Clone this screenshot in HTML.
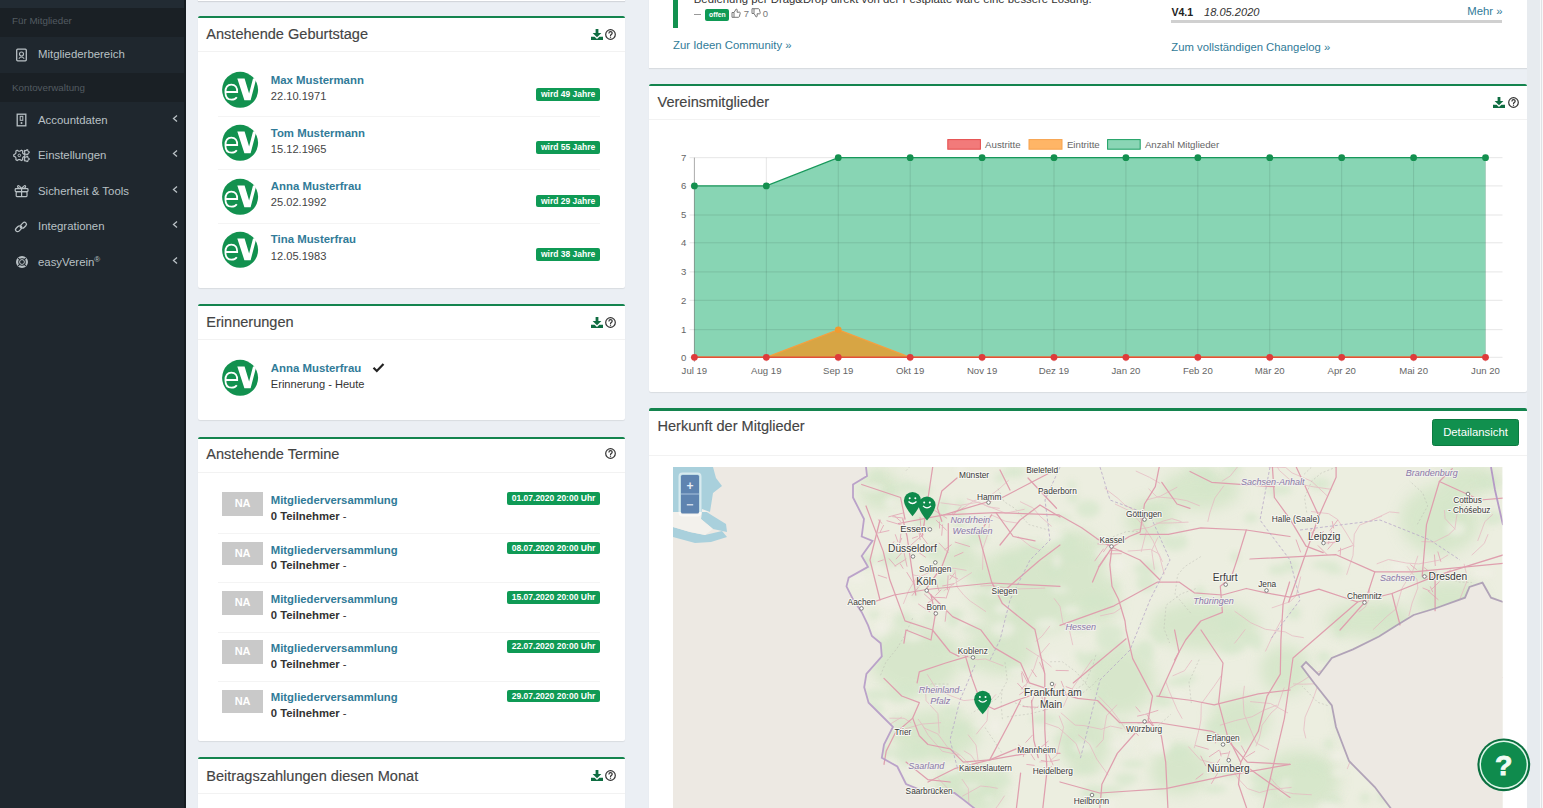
<!DOCTYPE html>
<html><head><meta charset="utf-8"><title>easyVerein</title>
<style>
html,body{margin:0;padding:0;}
body{width:1543px;height:808px;overflow:hidden;position:relative;background:#ebeff4;font-family:"Liberation Sans", sans-serif;}
.t{position:absolute;white-space:nowrap;line-height:1;}
svg{overflow:visible}
</style></head><body>
<div style="position:absolute;left:0.00px;top:0.00px;width:186.00px;height:808.00px;background:#1f272e"></div>
<div style="position:absolute;left:0.00px;top:0.00px;width:186.00px;height:8.00px;background:#222b33"></div>
<div style="position:absolute;left:0.00px;top:8.00px;width:186.00px;height:28.50px;background:#1a2025"></div>
<div style="position:absolute;left:0.00px;top:73.00px;width:186.00px;height:29.00px;background:#1a2025"></div>
<div style="position:absolute;left:184.00px;top:0.00px;width:2.00px;height:808.00px;background:#161c21"></div>
<div class="t" style="left:12.00px;top:16.17px;font-size:9.8px;color:#535b61;font-weight:400;">Für Mitglieder</div>
<div class="t" style="left:12.00px;top:82.67px;font-size:9.8px;color:#535b61;font-weight:400;">Kontoverwaltung</div>
<div class="t" style="left:38.00px;top:49.11px;font-size:11.4px;color:#b9c1c5;font-weight:400;">Mitgliederbereich</div>
<div class="t" style="left:38.00px;top:114.91px;font-size:11.4px;color:#b9c1c5;font-weight:400;">Accountdaten</div>
<svg style="position:absolute;left:171px;top:113.6px" width="8" height="10"><polyline points="6,1.5 2.5,4.5 6,7.5" fill="none" stroke="#b9c1c5" stroke-width="1.3"/></svg>
<div class="t" style="left:38.00px;top:150.41px;font-size:11.4px;color:#b9c1c5;font-weight:400;">Einstellungen</div>
<svg style="position:absolute;left:171px;top:149.1px" width="8" height="10"><polyline points="6,1.5 2.5,4.5 6,7.5" fill="none" stroke="#b9c1c5" stroke-width="1.3"/></svg>
<div class="t" style="left:38.00px;top:185.91px;font-size:11.4px;color:#b9c1c5;font-weight:400;">Sicherheit &amp; Tools</div>
<svg style="position:absolute;left:171px;top:184.6px" width="8" height="10"><polyline points="6,1.5 2.5,4.5 6,7.5" fill="none" stroke="#b9c1c5" stroke-width="1.3"/></svg>
<div class="t" style="left:38.00px;top:221.41px;font-size:11.4px;color:#b9c1c5;font-weight:400;">Integrationen</div>
<svg style="position:absolute;left:171px;top:220.1px" width="8" height="10"><polyline points="6,1.5 2.5,4.5 6,7.5" fill="none" stroke="#b9c1c5" stroke-width="1.3"/></svg>
<div class="t" style="left:38.00px;top:256.91px;font-size:11.4px;color:#b9c1c5;font-weight:400;">easyVerein<span style="font-size:8px;position:relative;top:-4px">®</span></div>
<svg style="position:absolute;left:171px;top:255.6px" width="8" height="10"><polyline points="6,1.5 2.5,4.5 6,7.5" fill="none" stroke="#b9c1c5" stroke-width="1.3"/></svg>
<svg style="position:absolute;left:15px;top:48px" width="13" height="14"><rect x="1.7" y="1.2" width="9.6" height="11.6" rx="1" fill="none" stroke="#b9c1c5" stroke-width="1.3"/><circle cx="6.5" cy="6" r="2" fill="none" stroke="#b9c1c5" stroke-width="1.1"/><path d="M3.8 10.6 Q6.5 7.5 9.2 10.6" fill="none" stroke="#b9c1c5" stroke-width="1.1"/></svg>
<svg style="position:absolute;left:15px;top:113px" width="13" height="14"><rect x="2.2" y="1.2" width="8.6" height="11.6" fill="none" stroke="#b9c1c5" stroke-width="1.3"/><rect x="5.2" y="3.3" width="2.6" height="4" fill="none" stroke="#b9c1c5" stroke-width="1"/><circle cx="6.5" cy="10" r="1" fill="#b9c1c5"/></svg>
<svg style="position:absolute;left:0;top:0" width="40" height="300"><polygon points="24.85,154.67 24.85,156.13 23.18,157.01 22.63,157.96 22.71,159.84 21.44,160.57 19.85,159.56 18.75,159.56 17.16,160.57 15.89,159.84 15.97,157.96 15.42,157.01 13.75,156.13 13.75,154.67 15.42,153.79 15.97,152.84 15.89,150.96 17.16,150.23 18.75,151.24 19.85,151.24 21.44,150.23 22.71,150.96 22.63,152.84 23.18,153.79" fill="none" stroke="#b9c1c5" stroke-width="1.2" stroke-linejoin="round"/><circle cx="19.3" cy="155.4" r="1.3" fill="none" stroke="#b9c1c5" stroke-width="1"/><polygon points="29.17,151.89 29.17,152.71 28.29,153.16 27.94,153.64 27.78,154.62 27.01,154.87 26.30,154.18 25.74,153.99 24.76,154.14 24.28,153.48 24.72,152.60 24.72,152.00 24.28,151.12 24.76,150.46 25.74,150.61 26.30,150.42 27.01,149.73 27.78,149.98 27.94,150.96 28.29,151.44" fill="none" stroke="#b9c1c5" stroke-width="1.1"/><polygon points="29.17,158.59 29.17,159.41 28.29,159.86 27.94,160.34 27.78,161.32 27.01,161.57 26.30,160.88 25.74,160.69 24.76,160.84 24.28,160.18 24.72,159.30 24.72,158.70 24.28,157.82 24.76,157.16 25.74,157.31 26.30,157.12 27.01,156.43 27.78,156.68 27.94,157.66 28.29,158.14" fill="none" stroke="#b9c1c5" stroke-width="1.1"/></svg>
<svg style="position:absolute;left:0;top:0" width="40" height="300"><rect x="15.2" y="188.6" width="12.8" height="3" rx="0.8" fill="none" stroke="#b9c1c5" stroke-width="1.2"/><rect x="16.2" y="191.6" width="10.8" height="5" rx="0.8" fill="none" stroke="#b9c1c5" stroke-width="1.2"/><line x1="21.6" y1="188.6" x2="21.6" y2="196.6" stroke="#b9c1c5" stroke-width="1.2"/><path d="M21.6 188.4 Q18 184 17.5 186.5 Q17.5 188.4 21.6 188.4 Q25.2 184 25.7 186.5 Q25.7 188.4 21.6 188.4" fill="none" stroke="#b9c1c5" stroke-width="1.1"/></svg>
<svg style="position:absolute;left:14px;top:219.5px" width="14" height="14"><path d="M6 8 L8 6" stroke="#b9c1c5" stroke-width="1.3"/><rect x="1.2" y="6.8" width="6.5" height="4" rx="2" transform="rotate(-45 4.5 8.8)" fill="none" stroke="#b9c1c5" stroke-width="1.3"/><rect x="6.3" y="3.2" width="6.5" height="4" rx="2" transform="rotate(-45 9.5 5.2)" fill="none" stroke="#b9c1c5" stroke-width="1.3"/></svg>
<svg style="position:absolute;left:14.5px;top:255px" width="14" height="14"><circle cx="7" cy="7" r="4.9" fill="none" stroke="#b9c1c5" stroke-width="2.2"/><circle cx="7" cy="7" r="2.2" fill="#1f272e"/><path d="M3.2 3.2 L5.2 5.2 M10.8 3.2 L8.8 5.2 M3.2 10.8 L5.2 8.8 M10.8 10.8 L8.8 8.8" stroke="#1f272e" stroke-width="1.2"/><circle cx="7" cy="7" r="2.4" fill="none" stroke="#b9c1c5" stroke-width="1"/></svg>
<div style="position:absolute;left:198.00px;top:-10.00px;width:426.50px;height:11.00px;background:#fff;box-shadow:0 1px 1px rgba(0,0,0,0.1)"></div>
<div style="position:absolute;left:198.00px;top:16.00px;width:426.50px;height:272.00px;background:#fff;box-shadow:0 1px 1px rgba(0,0,0,0.08);border-radius:2px"></div>
<div style="position:absolute;left:198.00px;top:16.00px;width:426.50px;height:2.40px;background:#14844e;border-radius:2px 2px 0 0"></div>
<div class="t" style="left:206.30px;top:26.93px;font-size:14.55px;color:#444;font-weight:400;-webkit-text-stroke:0.15px #444">Anstehende Geburtstage</div>
<div style="position:absolute;left:198.00px;top:51.00px;width:426.50px;height:1.00px;background:#f2f2f2"></div>
<svg style="position:absolute;left:590.5px;top:29.0px" width="12" height="11"><rect x="4.6" y="0" width="2.8" height="4.5" fill="#0f6d42"/><polygon points="1.6,4 10.4,4 6,8.3" fill="#0f6d42"/><path d="M0 7.8 H3.6 L6 10 L8.4 7.8 H12 V11 H0 Z" fill="#0f6d42"/></svg>
<svg style="position:absolute;left:605.2px;top:29.0px" width="11" height="11"><circle cx="5.5" cy="5.5" r="4.8" fill="none" stroke="#333" stroke-width="1.2"/><path d="M3.9 4.4 Q3.9 2.6 5.5 2.6 Q7.2 2.6 7.2 4.1 Q7.2 5.1 6.1 5.6 Q5.5 5.9 5.5 6.9" fill="none" stroke="#333" stroke-width="1.2"/><rect x="4.9" y="7.6" width="1.2" height="1.2" fill="#333"/></svg>
<svg style="position:absolute;left:222.1px;top:72.0px" width="37" height="37" viewBox="0 0 37 37"><circle cx="18.1" cy="17.8" r="18" fill="#12914f"/><path d="M4.2 20 H15.2 Q15.4 12.6 9.3 12.6 Q3.4 12.6 3.4 20.2 Q3.4 27.7 9.6 27.7 Q13 27.7 14.8 25.2" fill="none" stroke="#fff" stroke-width="1.8"/><polygon points="15.3,6.6 22.6,6.6 27.1,21.5 31,6.6 34.3,6.6 28.6,28.2 22.4,28.2" fill="#fff"/></svg>
<div class="t" style="left:270.80px;top:74.51px;font-size:11.4px;color:#317b98;font-weight:700;">Max Mustermann</div>
<div class="t" style="left:270.80px;top:90.77px;font-size:11.1px;color:#444;font-weight:400;">22.10.1971</div>
<div style="position:absolute;left:536.30px;top:88.10px;width:63.70px;height:12.70px;background:#0f9a55;border-radius:2px;color:#fff;font-weight:700;font-size:8.5px;line-height:12.70px;text-align:center;white-space:nowrap">wird 49 Jahre</div>
<div style="position:absolute;left:218.00px;top:116.00px;width:382.00px;height:1.00px;background:#f4f4f4"></div>
<svg style="position:absolute;left:222.1px;top:125.3px" width="37" height="37" viewBox="0 0 37 37"><circle cx="18.1" cy="17.8" r="18" fill="#12914f"/><path d="M4.2 20 H15.2 Q15.4 12.6 9.3 12.6 Q3.4 12.6 3.4 20.2 Q3.4 27.7 9.6 27.7 Q13 27.7 14.8 25.2" fill="none" stroke="#fff" stroke-width="1.8"/><polygon points="15.3,6.6 22.6,6.6 27.1,21.5 31,6.6 34.3,6.6 28.6,28.2 22.4,28.2" fill="#fff"/></svg>
<div class="t" style="left:270.80px;top:127.76px;font-size:11.4px;color:#317b98;font-weight:700;">Tom Mustermann</div>
<div class="t" style="left:270.80px;top:144.01px;font-size:11.1px;color:#444;font-weight:400;">15.12.1965</div>
<div style="position:absolute;left:536.30px;top:141.35px;width:63.70px;height:12.70px;background:#0f9a55;border-radius:2px;color:#fff;font-weight:700;font-size:8.5px;line-height:12.70px;text-align:center;white-space:nowrap">wird 55 Jahre</div>
<div style="position:absolute;left:218.00px;top:169.25px;width:382.00px;height:1.00px;background:#f4f4f4"></div>
<svg style="position:absolute;left:222.1px;top:178.5px" width="37" height="37" viewBox="0 0 37 37"><circle cx="18.1" cy="17.8" r="18" fill="#12914f"/><path d="M4.2 20 H15.2 Q15.4 12.6 9.3 12.6 Q3.4 12.6 3.4 20.2 Q3.4 27.7 9.6 27.7 Q13 27.7 14.8 25.2" fill="none" stroke="#fff" stroke-width="1.8"/><polygon points="15.3,6.6 22.6,6.6 27.1,21.5 31,6.6 34.3,6.6 28.6,28.2 22.4,28.2" fill="#fff"/></svg>
<div class="t" style="left:270.80px;top:181.01px;font-size:11.4px;color:#317b98;font-weight:700;">Anna Musterfrau</div>
<div class="t" style="left:270.80px;top:197.26px;font-size:11.1px;color:#444;font-weight:400;">25.02.1992</div>
<div style="position:absolute;left:536.30px;top:194.60px;width:63.70px;height:12.70px;background:#0f9a55;border-radius:2px;color:#fff;font-weight:700;font-size:8.5px;line-height:12.70px;text-align:center;white-space:nowrap">wird 29 Jahre</div>
<div style="position:absolute;left:218.00px;top:222.50px;width:382.00px;height:1.00px;background:#f4f4f4"></div>
<svg style="position:absolute;left:222.1px;top:231.8px" width="37" height="37" viewBox="0 0 37 37"><circle cx="18.1" cy="17.8" r="18" fill="#12914f"/><path d="M4.2 20 H15.2 Q15.4 12.6 9.3 12.6 Q3.4 12.6 3.4 20.2 Q3.4 27.7 9.6 27.7 Q13 27.7 14.8 25.2" fill="none" stroke="#fff" stroke-width="1.8"/><polygon points="15.3,6.6 22.6,6.6 27.1,21.5 31,6.6 34.3,6.6 28.6,28.2 22.4,28.2" fill="#fff"/></svg>
<div class="t" style="left:270.80px;top:234.26px;font-size:11.4px;color:#317b98;font-weight:700;">Tina Musterfrau</div>
<div class="t" style="left:270.80px;top:250.51px;font-size:11.1px;color:#444;font-weight:400;">12.05.1983</div>
<div style="position:absolute;left:536.30px;top:247.85px;width:63.70px;height:12.70px;background:#0f9a55;border-radius:2px;color:#fff;font-weight:700;font-size:8.5px;line-height:12.70px;text-align:center;white-space:nowrap">wird 38 Jahre</div>
<div style="position:absolute;left:198.00px;top:304.00px;width:426.50px;height:116.00px;background:#fff;box-shadow:0 1px 1px rgba(0,0,0,0.08);border-radius:2px"></div>
<div style="position:absolute;left:198.00px;top:304.00px;width:426.50px;height:2.40px;background:#14844e;border-radius:2px 2px 0 0"></div>
<div class="t" style="left:206.30px;top:315.23px;font-size:14.55px;color:#444;font-weight:400;-webkit-text-stroke:0.15px #444">Erinnerungen</div>
<div style="position:absolute;left:198.00px;top:339.40px;width:426.50px;height:1.00px;background:#f2f2f2"></div>
<svg style="position:absolute;left:590.5px;top:317.3px" width="12" height="11"><rect x="4.6" y="0" width="2.8" height="4.5" fill="#0f6d42"/><polygon points="1.6,4 10.4,4 6,8.3" fill="#0f6d42"/><path d="M0 7.8 H3.6 L6 10 L8.4 7.8 H12 V11 H0 Z" fill="#0f6d42"/></svg>
<svg style="position:absolute;left:605.2px;top:317.3px" width="11" height="11"><circle cx="5.5" cy="5.5" r="4.8" fill="none" stroke="#333" stroke-width="1.2"/><path d="M3.9 4.4 Q3.9 2.6 5.5 2.6 Q7.2 2.6 7.2 4.1 Q7.2 5.1 6.1 5.6 Q5.5 5.9 5.5 6.9" fill="none" stroke="#333" stroke-width="1.2"/><rect x="4.9" y="7.6" width="1.2" height="1.2" fill="#333"/></svg>
<svg style="position:absolute;left:222.1px;top:359.9px" width="37" height="37" viewBox="0 0 37 37"><circle cx="18.1" cy="17.8" r="18" fill="#12914f"/><path d="M4.2 20 H15.2 Q15.4 12.6 9.3 12.6 Q3.4 12.6 3.4 20.2 Q3.4 27.7 9.6 27.7 Q13 27.7 14.8 25.2" fill="none" stroke="#fff" stroke-width="1.8"/><polygon points="15.3,6.6 22.6,6.6 27.1,21.5 31,6.6 34.3,6.6 28.6,28.2 22.4,28.2" fill="#fff"/></svg>
<div class="t" style="left:270.80px;top:363.21px;font-size:11.4px;color:#317b98;font-weight:700;">Anna Musterfrau</div>
<svg style="position:absolute;left:372.3px;top:362px" width="13" height="11"><polyline points="1.5,5.8 4.8,9 11.5,2" fill="none" stroke="#222" stroke-width="2.2"/></svg>
<div class="t" style="left:270.80px;top:379.37px;font-size:11.1px;color:#333;font-weight:400;">Erinnerung - Heute</div>
<div style="position:absolute;left:198.00px;top:437.00px;width:426.50px;height:303.50px;background:#fff;box-shadow:0 1px 1px rgba(0,0,0,0.08);border-radius:2px"></div>
<div style="position:absolute;left:198.00px;top:437.00px;width:426.50px;height:2.40px;background:#14844e;border-radius:2px 2px 0 0"></div>
<div class="t" style="left:206.30px;top:447.43px;font-size:14.55px;color:#444;font-weight:400;-webkit-text-stroke:0.15px #444">Anstehende Termine</div>
<div style="position:absolute;left:198.00px;top:471.60px;width:426.50px;height:1.00px;background:#f2f2f2"></div>
<svg style="position:absolute;left:605.2px;top:447.5px" width="11" height="11"><circle cx="5.5" cy="5.5" r="4.8" fill="none" stroke="#333" stroke-width="1.2"/><path d="M3.9 4.4 Q3.9 2.6 5.5 2.6 Q7.2 2.6 7.2 4.1 Q7.2 5.1 6.1 5.6 Q5.5 5.9 5.5 6.9" fill="none" stroke="#333" stroke-width="1.2"/><rect x="4.9" y="7.6" width="1.2" height="1.2" fill="#333"/></svg>
<div style="position:absolute;left:222.2px;top:492.40px;width:40.8px;height:23.8px;background:#c9c9c9;color:#fff;font-weight:700;font-size:11px;line-height:23.8px;text-align:center">NA</div>
<div class="t" style="left:270.80px;top:495.29px;font-size:11.3px;color:#317b98;font-weight:700;">Mitgliederversammlung</div>
<div class="t" style="left:270.80px;top:511.10px;font-size:11.3px;color:#333;font-weight:400;"><b>0 Teilnehmer</b> -</div>
<div style="position:absolute;left:507.20px;top:492.40px;width:92.80px;height:12.60px;background:#0f9a55;border-radius:2px;color:#fff;font-weight:700;font-size:8.5px;line-height:12.60px;text-align:center;white-space:nowrap">01.07.2020 20:00 Uhr</div>
<div style="position:absolute;left:218.00px;top:533.00px;width:382.00px;height:1.00px;background:#f4f4f4"></div>
<div style="position:absolute;left:222.2px;top:541.70px;width:40.8px;height:23.8px;background:#c9c9c9;color:#fff;font-weight:700;font-size:11px;line-height:23.8px;text-align:center">NA</div>
<div class="t" style="left:270.80px;top:544.59px;font-size:11.3px;color:#317b98;font-weight:700;">Mitgliederversammlung</div>
<div class="t" style="left:270.80px;top:560.39px;font-size:11.3px;color:#333;font-weight:400;"><b>0 Teilnehmer</b> -</div>
<div style="position:absolute;left:507.20px;top:541.70px;width:92.80px;height:12.60px;background:#0f9a55;border-radius:2px;color:#fff;font-weight:700;font-size:8.5px;line-height:12.60px;text-align:center;white-space:nowrap">08.07.2020 20:00 Uhr</div>
<div style="position:absolute;left:218.00px;top:582.30px;width:382.00px;height:1.00px;background:#f4f4f4"></div>
<div style="position:absolute;left:222.2px;top:591.00px;width:40.8px;height:23.8px;background:#c9c9c9;color:#fff;font-weight:700;font-size:11px;line-height:23.8px;text-align:center">NA</div>
<div class="t" style="left:270.80px;top:593.89px;font-size:11.3px;color:#317b98;font-weight:700;">Mitgliederversammlung</div>
<div class="t" style="left:270.80px;top:609.70px;font-size:11.3px;color:#333;font-weight:400;"><b>0 Teilnehmer</b> -</div>
<div style="position:absolute;left:507.20px;top:591.00px;width:92.80px;height:12.60px;background:#0f9a55;border-radius:2px;color:#fff;font-weight:700;font-size:8.5px;line-height:12.60px;text-align:center;white-space:nowrap">15.07.2020 20:00 Uhr</div>
<div style="position:absolute;left:218.00px;top:631.60px;width:382.00px;height:1.00px;background:#f4f4f4"></div>
<div style="position:absolute;left:222.2px;top:640.30px;width:40.8px;height:23.8px;background:#c9c9c9;color:#fff;font-weight:700;font-size:11px;line-height:23.8px;text-align:center">NA</div>
<div class="t" style="left:270.80px;top:643.19px;font-size:11.3px;color:#317b98;font-weight:700;">Mitgliederversammlung</div>
<div class="t" style="left:270.80px;top:659.00px;font-size:11.3px;color:#333;font-weight:400;"><b>0 Teilnehmer</b> -</div>
<div style="position:absolute;left:507.20px;top:640.30px;width:92.80px;height:12.60px;background:#0f9a55;border-radius:2px;color:#fff;font-weight:700;font-size:8.5px;line-height:12.60px;text-align:center;white-space:nowrap">22.07.2020 20:00 Uhr</div>
<div style="position:absolute;left:218.00px;top:680.90px;width:382.00px;height:1.00px;background:#f4f4f4"></div>
<div style="position:absolute;left:222.2px;top:689.60px;width:40.8px;height:23.8px;background:#c9c9c9;color:#fff;font-weight:700;font-size:11px;line-height:23.8px;text-align:center">NA</div>
<div class="t" style="left:270.80px;top:692.49px;font-size:11.3px;color:#317b98;font-weight:700;">Mitgliederversammlung</div>
<div class="t" style="left:270.80px;top:708.30px;font-size:11.3px;color:#333;font-weight:400;"><b>0 Teilnehmer</b> -</div>
<div style="position:absolute;left:507.20px;top:689.60px;width:92.80px;height:12.60px;background:#0f9a55;border-radius:2px;color:#fff;font-weight:700;font-size:8.5px;line-height:12.60px;text-align:center;white-space:nowrap">29.07.2020 20:00 Uhr</div>
<div style="position:absolute;left:198.00px;top:757.00px;width:426.50px;height:60.00px;background:#fff;box-shadow:0 1px 1px rgba(0,0,0,0.08);border-radius:2px"></div>
<div style="position:absolute;left:198.00px;top:757.00px;width:426.50px;height:2.40px;background:#14844e;border-radius:2px 2px 0 0"></div>
<div class="t" style="left:206.30px;top:769.13px;font-size:14.55px;color:#444;font-weight:400;-webkit-text-stroke:0.15px #444">Beitragszahlungen diesen Monat</div>
<div style="position:absolute;left:198.00px;top:793.00px;width:426.50px;height:1.00px;background:#f2f2f2"></div>
<svg style="position:absolute;left:590.5px;top:770.0px" width="12" height="11"><rect x="4.6" y="0" width="2.8" height="4.5" fill="#0f6d42"/><polygon points="1.6,4 10.4,4 6,8.3" fill="#0f6d42"/><path d="M0 7.8 H3.6 L6 10 L8.4 7.8 H12 V11 H0 Z" fill="#0f6d42"/></svg>
<svg style="position:absolute;left:605.2px;top:770.0px" width="11" height="11"><circle cx="5.5" cy="5.5" r="4.8" fill="none" stroke="#333" stroke-width="1.2"/><path d="M3.9 4.4 Q3.9 2.6 5.5 2.6 Q7.2 2.6 7.2 4.1 Q7.2 5.1 6.1 5.6 Q5.5 5.9 5.5 6.9" fill="none" stroke="#333" stroke-width="1.2"/><rect x="4.9" y="7.6" width="1.2" height="1.2" fill="#333"/></svg>
<div style="position:absolute;left:649.20px;top:-20.00px;width:877.80px;height:87.50px;background:#fff;box-shadow:0 1px 1px rgba(0,0,0,0.08)"></div>
<div style="position:absolute;left:672.50px;top:-5.00px;width:5.00px;height:33.00px;background:#12914f"></div>
<div class="t" style="left:693.80px;top:-5.65px;font-size:11.35px;color:#333;font-weight:400;">Bedienung per Drag&amp;Drop direkt von der Festplatte wäre eine bessere Lösung.</div>
<div style="position:absolute;left:694.00px;top:13.70px;width:7.00px;height:1.00px;background:#999"></div>
<div style="position:absolute;left:705.30px;top:8.90px;width:24.10px;height:11.70px;background:#0f9a55;border-radius:2px;color:#fff;font-weight:700;font-size:6.8px;line-height:11.70px;text-align:center;white-space:nowrap">offen</div>
<div class="t" style="left:743.80px;top:9.43px;font-size:9.5px;color:#777;font-weight:400;">7</div>
<div class="t" style="left:762.80px;top:9.43px;font-size:9.5px;color:#777;font-weight:400;">0</div>
<svg style="position:absolute;left:731px;top:8px" width="10" height="10"><path d="M1 4.5 H3 V9.3 H1 Z M3 4.5 L5.2 1 Q6.5 1 6.2 3 L6 4.2 H8.8 Q9.5 4.5 9.2 5.3 L8.3 8.8 Q8 9.3 7.4 9.3 H3" fill="none" stroke="#777" stroke-width="1"/></svg>
<svg style="position:absolute;left:750.5px;top:8px" width="10" height="10"><path d="M1 0.7 H3 V5.5 H1 Z M3 5.5 L5.2 9 Q6.5 9 6.2 7 L6 5.8 H8.8 Q9.5 5.5 9.2 4.7 L8.3 1.2 Q8 0.7 7.4 0.7 H3" fill="none" stroke="#777" stroke-width="1"/></svg>
<div class="t" style="left:673.00px;top:40.25px;font-size:11.35px;color:#317b98;font-weight:400;">Zur Ideen Community »</div>
<div class="t" style="left:1171.40px;top:7.19px;font-size:10.6px;color:#222;font-weight:700;">V4.1</div>
<div class="t" style="left:1204.00px;top:6.77px;font-size:11.1px;color:#333;font-weight:400;font-style:italic">18.05.2020</div>
<div class="t" style="right:40.50px;top:6.05px;font-size:11.35px;color:#317b98;font-weight:400;">Mehr »</div>
<div style="position:absolute;left:1171.30px;top:20.00px;width:331.20px;height:2.60px;background:#d0d0d0"></div>
<div class="t" style="left:1171.30px;top:42.09px;font-size:11.3px;color:#317b98;font-weight:400;">Zum vollständigen Changelog »</div>
<div style="position:absolute;left:649.20px;top:83.50px;width:877.80px;height:308.50px;background:#fff;box-shadow:0 1px 1px rgba(0,0,0,0.08);border-radius:2px"></div>
<div style="position:absolute;left:649.20px;top:83.50px;width:877.80px;height:2.40px;background:#14844e;border-radius:2px 2px 0 0"></div>
<div class="t" style="left:657.50px;top:94.53px;font-size:14.55px;color:#444;font-weight:400;-webkit-text-stroke:0.15px #444">Vereinsmitglieder</div>
<div style="position:absolute;left:649.20px;top:119.00px;width:877.80px;height:1.00px;background:#f2f2f2"></div>
<svg style="position:absolute;left:1492.8px;top:96.8px" width="12" height="11"><rect x="4.6" y="0" width="2.8" height="4.5" fill="#0f6d42"/><polygon points="1.6,4 10.4,4 6,8.3" fill="#0f6d42"/><path d="M0 7.8 H3.6 L6 10 L8.4 7.8 H12 V11 H0 Z" fill="#0f6d42"/></svg>
<svg style="position:absolute;left:1507.8px;top:97.0px" width="11" height="11"><circle cx="5.5" cy="5.5" r="4.8" fill="none" stroke="#333" stroke-width="1.2"/><path d="M3.9 4.4 Q3.9 2.6 5.5 2.6 Q7.2 2.6 7.2 4.1 Q7.2 5.1 6.1 5.6 Q5.5 5.9 5.5 6.9" fill="none" stroke="#333" stroke-width="1.2"/><rect x="4.9" y="7.6" width="1.2" height="1.2" fill="#333"/></svg>
<svg style="position:absolute;left:0;top:0" width="1543" height="808"><rect x="947.8" y="139.6" width="32.6" height="9.6" fill="#f27a7a" stroke="#e44b4b" stroke-width="1"/><rect x="1029" y="139.6" width="33" height="9.6" fill="#ffb566" stroke="#f7a24c" stroke-width="1"/><rect x="1107.6" y="139.6" width="32.6" height="9.6" fill="#8ad5b5" stroke="#1a9e62" stroke-width="1"/><text x="985.1" y="147.6" font-family="Liberation Sans" font-size="9.7" fill="#666">Austritte</text><text x="1066.9" y="147.6" font-family="Liberation Sans" font-size="9.7" fill="#666">Eintritte</text><text x="1144.9" y="147.6" font-family="Liberation Sans" font-size="9.7" fill="#666">Anzahl Mitglieder</text><text x="686.4" y="360.70" text-anchor="end" font-family="Liberation Sans" font-size="9.6" fill="#666">0</text><text x="686.4" y="333.10" text-anchor="end" font-family="Liberation Sans" font-size="9.6" fill="#666">1</text><text x="686.4" y="303.70" text-anchor="end" font-family="Liberation Sans" font-size="9.6" fill="#666">2</text><text x="686.4" y="275.30" text-anchor="end" font-family="Liberation Sans" font-size="9.6" fill="#666">3</text><text x="686.4" y="246.20" text-anchor="end" font-family="Liberation Sans" font-size="9.6" fill="#666">4</text><text x="686.4" y="218.40" text-anchor="end" font-family="Liberation Sans" font-size="9.6" fill="#666">5</text><text x="686.4" y="189.30" text-anchor="end" font-family="Liberation Sans" font-size="9.6" fill="#666">6</text><text x="686.4" y="161.10" text-anchor="end" font-family="Liberation Sans" font-size="9.6" fill="#666">7</text><text x="694.40" y="373.6" text-anchor="middle" font-family="Liberation Sans" font-size="9.6" fill="#666">Jul 19</text><text x="766.32" y="373.6" text-anchor="middle" font-family="Liberation Sans" font-size="9.6" fill="#666">Aug 19</text><text x="838.24" y="373.6" text-anchor="middle" font-family="Liberation Sans" font-size="9.6" fill="#666">Sep 19</text><text x="910.16" y="373.6" text-anchor="middle" font-family="Liberation Sans" font-size="9.6" fill="#666">Okt 19</text><text x="982.08" y="373.6" text-anchor="middle" font-family="Liberation Sans" font-size="9.6" fill="#666">Nov 19</text><text x="1054.00" y="373.6" text-anchor="middle" font-family="Liberation Sans" font-size="9.6" fill="#666">Dez 19</text><text x="1125.92" y="373.6" text-anchor="middle" font-family="Liberation Sans" font-size="9.6" fill="#666">Jan 20</text><text x="1197.84" y="373.6" text-anchor="middle" font-family="Liberation Sans" font-size="9.6" fill="#666">Feb 20</text><text x="1269.76" y="373.6" text-anchor="middle" font-family="Liberation Sans" font-size="9.6" fill="#666">Mär 20</text><text x="1341.68" y="373.6" text-anchor="middle" font-family="Liberation Sans" font-size="9.6" fill="#666">Apr 20</text><text x="1413.60" y="373.6" text-anchor="middle" font-family="Liberation Sans" font-size="9.6" fill="#666">Mai 20</text><text x="1485.52" y="373.6" text-anchor="middle" font-family="Liberation Sans" font-size="9.6" fill="#666">Jun 20</text><polygon points="694.40,357.3 694.40,185.90 766.32,185.90 838.24,157.70 910.16,157.70 982.08,157.70 1054.00,157.70 1125.92,157.70 1197.84,157.70 1269.76,157.70 1341.68,157.70 1413.60,157.70 1485.52,157.70 1485.52,357.3" fill="#88d5b4"/><line x1="689.5" y1="357.30" x2="1502.5" y2="357.30" stroke="rgba(0,0,0,0.1)" stroke-width="1"/><line x1="689.5" y1="329.70" x2="1502.5" y2="329.70" stroke="rgba(0,0,0,0.1)" stroke-width="1"/><line x1="689.5" y1="300.30" x2="1502.5" y2="300.30" stroke="rgba(0,0,0,0.1)" stroke-width="1"/><line x1="689.5" y1="271.90" x2="1502.5" y2="271.90" stroke="rgba(0,0,0,0.1)" stroke-width="1"/><line x1="689.5" y1="242.80" x2="1502.5" y2="242.80" stroke="rgba(0,0,0,0.1)" stroke-width="1"/><line x1="689.5" y1="215.00" x2="1502.5" y2="215.00" stroke="rgba(0,0,0,0.1)" stroke-width="1"/><line x1="689.5" y1="185.90" x2="1502.5" y2="185.90" stroke="rgba(0,0,0,0.1)" stroke-width="1"/><line x1="689.5" y1="157.70" x2="1502.5" y2="157.70" stroke="rgba(0,0,0,0.1)" stroke-width="1"/><line x1="694.40" y1="157.70" x2="694.40" y2="361.80" stroke="rgba(0,0,0,0.1)" stroke-width="1"/><line x1="766.32" y1="157.70" x2="766.32" y2="361.80" stroke="rgba(0,0,0,0.1)" stroke-width="1"/><line x1="838.24" y1="157.70" x2="838.24" y2="361.80" stroke="rgba(0,0,0,0.1)" stroke-width="1"/><line x1="910.16" y1="157.70" x2="910.16" y2="361.80" stroke="rgba(0,0,0,0.1)" stroke-width="1"/><line x1="982.08" y1="157.70" x2="982.08" y2="361.80" stroke="rgba(0,0,0,0.1)" stroke-width="1"/><line x1="1054.00" y1="157.70" x2="1054.00" y2="361.80" stroke="rgba(0,0,0,0.1)" stroke-width="1"/><line x1="1125.92" y1="157.70" x2="1125.92" y2="361.80" stroke="rgba(0,0,0,0.1)" stroke-width="1"/><line x1="1197.84" y1="157.70" x2="1197.84" y2="361.80" stroke="rgba(0,0,0,0.1)" stroke-width="1"/><line x1="1269.76" y1="157.70" x2="1269.76" y2="361.80" stroke="rgba(0,0,0,0.1)" stroke-width="1"/><line x1="1341.68" y1="157.70" x2="1341.68" y2="361.80" stroke="rgba(0,0,0,0.1)" stroke-width="1"/><line x1="1413.60" y1="157.70" x2="1413.60" y2="361.80" stroke="rgba(0,0,0,0.1)" stroke-width="1"/><line x1="1485.52" y1="157.70" x2="1485.52" y2="361.80" stroke="rgba(0,0,0,0.1)" stroke-width="1"/><line x1="694.40" y1="157.70" x2="694.40" y2="361.80" stroke="rgba(0,0,0,0.25)" stroke-width="1"/><polyline points="694.40,185.90 766.32,185.90 838.24,157.70 910.16,157.70 982.08,157.70 1054.00,157.70 1125.92,157.70 1197.84,157.70 1269.76,157.70 1341.68,157.70 1413.60,157.70 1485.52,157.70" fill="none" stroke="#16985a" stroke-width="1.3"/><polygon points="694.40,357.3 694.40,357.30 766.32,357.30 838.24,329.70 910.16,357.30 982.08,357.30 1054.00,357.30 1125.92,357.30 1197.84,357.30 1269.76,357.30 1341.68,357.30 1413.60,357.30 1485.52,357.30 1485.52,357.3" fill="#d7a544"/><polyline points="694.40,357.30 766.32,357.30 838.24,329.70 910.16,357.30 982.08,357.30 1054.00,357.30 1125.92,357.30 1197.84,357.30 1269.76,357.30 1341.68,357.30 1413.60,357.30 1485.52,357.30" fill="none" stroke="#f5a040" stroke-width="1.4"/><circle cx="838.24" cy="329.70" r="3.3" fill="#f29a2e"/><line x1="694.40" y1="357.3" x2="1485.52" y2="357.3" stroke="#e25038" stroke-width="1.6"/><circle cx="694.40" cy="185.90" r="3.4" fill="#14904f"/><circle cx="766.32" cy="185.90" r="3.4" fill="#14904f"/><circle cx="838.24" cy="157.70" r="3.4" fill="#14904f"/><circle cx="910.16" cy="157.70" r="3.4" fill="#14904f"/><circle cx="982.08" cy="157.70" r="3.4" fill="#14904f"/><circle cx="1054.00" cy="157.70" r="3.4" fill="#14904f"/><circle cx="1125.92" cy="157.70" r="3.4" fill="#14904f"/><circle cx="1197.84" cy="157.70" r="3.4" fill="#14904f"/><circle cx="1269.76" cy="157.70" r="3.4" fill="#14904f"/><circle cx="1341.68" cy="157.70" r="3.4" fill="#14904f"/><circle cx="1413.60" cy="157.70" r="3.4" fill="#14904f"/><circle cx="1485.52" cy="157.70" r="3.4" fill="#14904f"/><circle cx="694.40" cy="357.3" r="3.4" fill="#de3b3b"/><circle cx="766.32" cy="357.3" r="3.4" fill="#de3b3b"/><circle cx="838.24" cy="357.3" r="3.4" fill="#de3b3b"/><circle cx="910.16" cy="357.3" r="3.4" fill="#de3b3b"/><circle cx="982.08" cy="357.3" r="3.4" fill="#de3b3b"/><circle cx="1054.00" cy="357.3" r="3.4" fill="#de3b3b"/><circle cx="1125.92" cy="357.3" r="3.4" fill="#de3b3b"/><circle cx="1197.84" cy="357.3" r="3.4" fill="#de3b3b"/><circle cx="1269.76" cy="357.3" r="3.4" fill="#de3b3b"/><circle cx="1341.68" cy="357.3" r="3.4" fill="#de3b3b"/><circle cx="1413.60" cy="357.3" r="3.4" fill="#de3b3b"/><circle cx="1485.52" cy="357.3" r="3.4" fill="#de3b3b"/></svg>
<div style="position:absolute;left:649.20px;top:408.30px;width:877.80px;height:420.00px;background:#fff;box-shadow:0 1px 1px rgba(0,0,0,0.08);border-radius:2px"></div>
<div style="position:absolute;left:649.20px;top:408.30px;width:877.80px;height:2.40px;background:#14844e;border-radius:2px 2px 0 0"></div>
<div class="t" style="left:657.50px;top:418.93px;font-size:14.55px;color:#444;font-weight:400;-webkit-text-stroke:0.15px #444">Herkunft der Mitglieder</div>
<div style="position:absolute;left:649.20px;top:455.00px;width:877.80px;height:1.00px;background:#f2f2f2"></div>
<div style="position:absolute;left:1432.4px;top:419px;width:86.2px;height:26.8px;box-sizing:border-box;background:#11904e;border:1px solid #0c7a41;border-radius:2.5px;color:#fff;font-size:11.3px;line-height:25px;text-align:center">Detailansicht</div>
<svg style="position:absolute;left:0;top:0" width="1543" height="808"><defs><clipPath id="mc"><rect x="673" y="467" width="829.6" height="343"/></clipPath><filter id="bl" x="-50%" y="-50%" width="200%" height="200%"><feGaussianBlur stdDeviation="7"/></filter><filter id="bl2" x="-50%" y="-50%" width="200%" height="200%"><feGaussianBlur stdDeviation="3"/></filter></defs><g clip-path="url(#mc)"><rect x="673" y="467" width="829.6" height="343" fill="#eceee0"/><g filter="url(#bl)" fill="#d0e4c4" opacity="0.75"><ellipse cx="1030" cy="590" rx="60" ry="45"/><ellipse cx="1075" cy="560" rx="30" ry="30"/><ellipse cx="915" cy="660" rx="45" ry="35"/><ellipse cx="935" cy="735" rx="45" ry="25"/><ellipse cx="970" cy="790" rx="35" ry="25"/><ellipse cx="1000" cy="650" rx="35" ry="25"/><ellipse cx="1200" cy="490" rx="40" ry="20"/><ellipse cx="1205" cy="625" rx="55" ry="25"/><ellipse cx="1120" cy="680" rx="35" ry="35"/><ellipse cx="1085" cy="740" rx="25" ry="35"/><ellipse cx="1370" cy="620" rx="45" ry="18"/><ellipse cx="1285" cy="670" rx="25" ry="25"/><ellipse cx="1150" cy="520" rx="25" ry="20"/><ellipse cx="1300" cy="780" rx="40" ry="30"/><ellipse cx="1440" cy="520" rx="40" ry="35"/><ellipse cx="1100" cy="600" rx="20" ry="25"/><ellipse cx="1240" cy="720" rx="30" ry="25"/><ellipse cx="880" cy="490" rx="20" ry="20"/><ellipse cx="1450" cy="600" rx="35" ry="20"/><ellipse cx="960" cy="560" rx="20" ry="15"/><ellipse cx="1180" cy="770" rx="30" ry="25"/><ellipse cx="1350" cy="700" rx="12" ry="40"/><ellipse cx="1470" cy="480" rx="30" ry="15"/></g><g filter="url(#bl2)" fill="#d3e6c9" opacity="0.65"><ellipse cx="1061" cy="518" rx="11" ry="3"/><ellipse cx="1200" cy="592" rx="5" ry="6"/><ellipse cx="874" cy="615" rx="5" ry="4"/><ellipse cx="1127" cy="749" rx="5" ry="4"/><ellipse cx="1260" cy="790" rx="10" ry="5"/><ellipse cx="1487" cy="483" rx="13" ry="5"/><ellipse cx="944" cy="507" rx="7" ry="8"/><ellipse cx="968" cy="665" rx="10" ry="5"/><ellipse cx="1208" cy="488" rx="5" ry="4"/><ellipse cx="1294" cy="613" rx="7" ry="7"/><ellipse cx="1146" cy="569" rx="12" ry="7"/><ellipse cx="1009" cy="663" rx="9" ry="8"/><ellipse cx="1326" cy="565" rx="14" ry="4"/><ellipse cx="1123" cy="725" rx="6" ry="6"/><ellipse cx="876" cy="695" rx="12" ry="6"/><ellipse cx="1422" cy="574" rx="11" ry="7"/><ellipse cx="1229" cy="623" rx="12" ry="9"/><ellipse cx="1160" cy="693" rx="5" ry="7"/><ellipse cx="1273" cy="806" rx="12" ry="5"/><ellipse cx="1102" cy="695" rx="4" ry="6"/><ellipse cx="960" cy="507" rx="5" ry="8"/><ellipse cx="934" cy="551" rx="8" ry="8"/><ellipse cx="903" cy="620" rx="9" ry="8"/><ellipse cx="1385" cy="762" rx="7" ry="5"/><ellipse cx="1084" cy="769" rx="14" ry="4"/><ellipse cx="965" cy="546" rx="6" ry="6"/><ellipse cx="1235" cy="557" rx="4" ry="6"/><ellipse cx="1091" cy="660" rx="14" ry="7"/><ellipse cx="1187" cy="678" rx="11" ry="3"/><ellipse cx="1437" cy="733" rx="13" ry="8"/><ellipse cx="1106" cy="603" rx="5" ry="7"/><ellipse cx="891" cy="490" rx="6" ry="4"/><ellipse cx="1072" cy="485" rx="4" ry="4"/><ellipse cx="916" cy="591" rx="4" ry="8"/><ellipse cx="1251" cy="518" rx="7" ry="5"/><ellipse cx="1088" cy="509" rx="12" ry="9"/><ellipse cx="1154" cy="632" rx="5" ry="4"/><ellipse cx="1074" cy="557" rx="12" ry="4"/><ellipse cx="865" cy="791" rx="9" ry="4"/><ellipse cx="1205" cy="476" rx="9" ry="9"/><ellipse cx="1414" cy="704" rx="7" ry="5"/><ellipse cx="959" cy="730" rx="9" ry="8"/><ellipse cx="1065" cy="543" rx="12" ry="9"/><ellipse cx="1407" cy="742" rx="12" ry="7"/><ellipse cx="998" cy="644" rx="8" ry="3"/><ellipse cx="868" cy="562" rx="7" ry="7"/><ellipse cx="1475" cy="620" rx="13" ry="9"/><ellipse cx="1474" cy="591" rx="6" ry="4"/><ellipse cx="978" cy="537" rx="10" ry="8"/><ellipse cx="1399" cy="631" rx="11" ry="8"/><ellipse cx="905" cy="692" rx="13" ry="8"/><ellipse cx="1340" cy="630" rx="6" ry="8"/><ellipse cx="1067" cy="740" rx="14" ry="5"/><ellipse cx="1112" cy="790" rx="11" ry="4"/><ellipse cx="933" cy="519" rx="13" ry="8"/><ellipse cx="945" cy="749" rx="14" ry="7"/><ellipse cx="1079" cy="654" rx="5" ry="3"/><ellipse cx="1484" cy="689" rx="9" ry="9"/><ellipse cx="1133" cy="764" rx="12" ry="4"/><ellipse cx="1014" cy="567" rx="6" ry="7"/><ellipse cx="1019" cy="610" rx="5" ry="8"/><ellipse cx="1081" cy="623" rx="10" ry="8"/><ellipse cx="1125" cy="780" rx="9" ry="6"/><ellipse cx="1192" cy="473" rx="8" ry="4"/><ellipse cx="853" cy="740" rx="6" ry="6"/><ellipse cx="1324" cy="657" rx="7" ry="6"/><ellipse cx="1213" cy="734" rx="5" ry="6"/><ellipse cx="1012" cy="561" rx="12" ry="6"/><ellipse cx="1217" cy="726" rx="13" ry="6"/><ellipse cx="1250" cy="639" rx="9" ry="7"/><ellipse cx="1145" cy="649" rx="9" ry="9"/><ellipse cx="1307" cy="766" rx="13" ry="5"/><ellipse cx="1215" cy="789" rx="12" ry="4"/><ellipse cx="929" cy="618" rx="5" ry="4"/><ellipse cx="898" cy="695" rx="12" ry="8"/><ellipse cx="951" cy="711" rx="11" ry="4"/><ellipse cx="1426" cy="797" rx="6" ry="9"/><ellipse cx="1110" cy="633" rx="14" ry="8"/><ellipse cx="955" cy="614" rx="9" ry="5"/><ellipse cx="978" cy="576" rx="11" ry="3"/><ellipse cx="1212" cy="617" rx="4" ry="5"/><ellipse cx="1257" cy="642" rx="5" ry="9"/><ellipse cx="1365" cy="798" rx="5" ry="5"/><ellipse cx="876" cy="733" rx="7" ry="4"/><ellipse cx="1126" cy="778" rx="12" ry="5"/><ellipse cx="948" cy="780" rx="10" ry="7"/><ellipse cx="908" cy="487" rx="11" ry="6"/><ellipse cx="897" cy="787" rx="10" ry="8"/><ellipse cx="905" cy="759" rx="5" ry="8"/><ellipse cx="1146" cy="583" rx="10" ry="9"/><ellipse cx="1025" cy="511" rx="9" ry="4"/><ellipse cx="921" cy="522" rx="5" ry="4"/><ellipse cx="1054" cy="571" rx="12" ry="5"/><ellipse cx="1177" cy="528" rx="7" ry="3"/><ellipse cx="1014" cy="472" rx="11" ry="6"/><ellipse cx="974" cy="629" rx="13" ry="4"/><ellipse cx="1385" cy="614" rx="9" ry="8"/><ellipse cx="1107" cy="640" rx="11" ry="9"/><ellipse cx="1074" cy="751" rx="11" ry="7"/><ellipse cx="1114" cy="586" rx="5" ry="4"/><ellipse cx="896" cy="720" rx="7" ry="4"/><ellipse cx="905" cy="754" rx="13" ry="7"/><ellipse cx="1034" cy="550" rx="7" ry="6"/><ellipse cx="953" cy="619" rx="7" ry="9"/><ellipse cx="1485" cy="654" rx="6" ry="9"/><ellipse cx="1052" cy="589" rx="4" ry="5"/><ellipse cx="1160" cy="638" rx="6" ry="6"/><ellipse cx="853" cy="557" rx="5" ry="5"/><ellipse cx="877" cy="475" rx="7" ry="4"/><ellipse cx="1232" cy="647" rx="12" ry="7"/><ellipse cx="1318" cy="767" rx="8" ry="5"/><ellipse cx="1493" cy="518" rx="11" ry="7"/><ellipse cx="879" cy="752" rx="13" ry="7"/><ellipse cx="1329" cy="744" rx="5" ry="6"/><ellipse cx="1179" cy="752" rx="12" ry="8"/><ellipse cx="1231" cy="771" rx="11" ry="7"/><ellipse cx="1000" cy="478" rx="5" ry="5"/><ellipse cx="919" cy="752" rx="10" ry="7"/><ellipse cx="1259" cy="699" rx="9" ry="3"/><ellipse cx="1371" cy="722" rx="9" ry="6"/><ellipse cx="1281" cy="490" rx="11" ry="5"/><ellipse cx="899" cy="558" rx="11" ry="4"/><ellipse cx="1333" cy="800" rx="9" ry="5"/><ellipse cx="1163" cy="700" rx="12" ry="7"/><ellipse cx="1270" cy="493" rx="5" ry="5"/><ellipse cx="1335" cy="571" rx="10" ry="3"/><ellipse cx="890" cy="559" rx="11" ry="7"/><ellipse cx="1291" cy="566" rx="9" ry="6"/><ellipse cx="1155" cy="507" rx="13" ry="4"/><ellipse cx="1489" cy="786" rx="4" ry="6"/><ellipse cx="1385" cy="797" rx="8" ry="5"/><ellipse cx="987" cy="789" rx="6" ry="6"/><ellipse cx="943" cy="646" rx="14" ry="4"/><ellipse cx="1386" cy="640" rx="13" ry="7"/><ellipse cx="1001" cy="773" rx="9" ry="3"/><ellipse cx="852" cy="635" rx="9" ry="5"/><ellipse cx="942" cy="584" rx="7" ry="8"/><ellipse cx="851" cy="723" rx="12" ry="4"/><ellipse cx="1455" cy="710" rx="13" ry="5"/><ellipse cx="1093" cy="601" rx="14" ry="7"/><ellipse cx="1086" cy="613" rx="7" ry="3"/><ellipse cx="916" cy="752" rx="7" ry="9"/><ellipse cx="1013" cy="558" rx="9" ry="4"/><ellipse cx="1094" cy="793" rx="13" ry="8"/><ellipse cx="1262" cy="778" rx="13" ry="6"/><ellipse cx="1320" cy="484" rx="11" ry="6"/><ellipse cx="1341" cy="687" rx="7" ry="3"/><ellipse cx="1455" cy="510" rx="9" ry="5"/><ellipse cx="1044" cy="719" rx="14" ry="5"/><ellipse cx="1278" cy="570" rx="10" ry="5"/><ellipse cx="959" cy="522" rx="6" ry="8"/><ellipse cx="1175" cy="542" rx="13" ry="9"/><ellipse cx="1144" cy="515" rx="6" ry="4"/><ellipse cx="1073" cy="498" rx="6" ry="5"/><ellipse cx="1222" cy="770" rx="11" ry="5"/><ellipse cx="1120" cy="646" rx="8" ry="5"/><ellipse cx="891" cy="562" rx="14" ry="4"/><ellipse cx="1179" cy="682" rx="13" ry="4"/><ellipse cx="1027" cy="552" rx="8" ry="6"/><ellipse cx="1473" cy="756" rx="13" ry="3"/><ellipse cx="871" cy="709" rx="13" ry="6"/><ellipse cx="1233" cy="467" rx="8" ry="9"/><ellipse cx="1389" cy="759" rx="14" ry="4"/><ellipse cx="921" cy="520" rx="9" ry="7"/><ellipse cx="1465" cy="713" rx="10" ry="8"/><ellipse cx="1149" cy="655" rx="4" ry="8"/><ellipse cx="1002" cy="781" rx="10" ry="5"/><ellipse cx="934" cy="553" rx="10" ry="7"/><ellipse cx="923" cy="491" rx="9" ry="6"/><ellipse cx="1103" cy="543" rx="10" ry="3"/></g><g filter="url(#bl2)" fill="#f3f1e9" opacity="0.6"><ellipse cx="1047" cy="624" rx="12" ry="6"/><ellipse cx="1427" cy="629" rx="6" ry="4"/><ellipse cx="1477" cy="707" rx="6" ry="3"/><ellipse cx="1175" cy="697" rx="7" ry="4"/><ellipse cx="1286" cy="782" rx="6" ry="3"/><ellipse cx="1071" cy="610" rx="9" ry="4"/><ellipse cx="1370" cy="719" rx="8" ry="4"/><ellipse cx="1483" cy="573" rx="11" ry="4"/><ellipse cx="995" cy="726" rx="6" ry="8"/><ellipse cx="1174" cy="531" rx="6" ry="5"/><ellipse cx="1284" cy="791" rx="5" ry="5"/><ellipse cx="989" cy="799" rx="5" ry="3"/><ellipse cx="889" cy="601" rx="11" ry="7"/><ellipse cx="1328" cy="807" rx="11" ry="5"/><ellipse cx="971" cy="786" rx="10" ry="3"/><ellipse cx="1284" cy="596" rx="7" ry="5"/><ellipse cx="961" cy="468" rx="6" ry="5"/><ellipse cx="1474" cy="509" rx="12" ry="4"/><ellipse cx="1083" cy="747" rx="11" ry="5"/><ellipse cx="882" cy="628" rx="7" ry="8"/><ellipse cx="976" cy="591" rx="11" ry="3"/><ellipse cx="1118" cy="744" rx="10" ry="3"/><ellipse cx="873" cy="488" rx="11" ry="4"/><ellipse cx="1338" cy="773" rx="7" ry="4"/><ellipse cx="1475" cy="677" rx="6" ry="7"/><ellipse cx="1057" cy="561" rx="4" ry="7"/><ellipse cx="1448" cy="683" rx="12" ry="3"/><ellipse cx="1003" cy="629" rx="12" ry="8"/><ellipse cx="1102" cy="553" rx="7" ry="5"/><ellipse cx="1456" cy="529" rx="10" ry="7"/><ellipse cx="1387" cy="731" rx="9" ry="5"/><ellipse cx="1059" cy="590" rx="10" ry="3"/><ellipse cx="979" cy="724" rx="6" ry="3"/><ellipse cx="872" cy="655" rx="7" ry="8"/><ellipse cx="1427" cy="804" rx="6" ry="3"/><ellipse cx="913" cy="637" rx="10" ry="5"/><ellipse cx="1003" cy="609" rx="9" ry="6"/><ellipse cx="1338" cy="756" rx="9" ry="4"/><ellipse cx="1399" cy="567" rx="9" ry="5"/><ellipse cx="1332" cy="535" rx="6" ry="4"/><ellipse cx="950" cy="769" rx="9" ry="5"/><ellipse cx="1109" cy="805" rx="8" ry="4"/><ellipse cx="1378" cy="690" rx="12" ry="4"/><ellipse cx="1160" cy="746" rx="11" ry="8"/><ellipse cx="876" cy="567" rx="5" ry="4"/><ellipse cx="1485" cy="666" rx="11" ry="5"/><ellipse cx="1416" cy="620" rx="6" ry="7"/><ellipse cx="1468" cy="503" rx="9" ry="6"/><ellipse cx="992" cy="593" rx="5" ry="4"/><ellipse cx="1016" cy="671" rx="9" ry="4"/><ellipse cx="857" cy="579" rx="9" ry="4"/><ellipse cx="1054" cy="536" rx="10" ry="6"/><ellipse cx="891" cy="502" rx="7" ry="6"/><ellipse cx="1267" cy="498" rx="5" ry="6"/><ellipse cx="1118" cy="564" rx="6" ry="8"/><ellipse cx="1054" cy="660" rx="7" ry="5"/><ellipse cx="1414" cy="807" rx="7" ry="4"/><ellipse cx="1325" cy="536" rx="4" ry="8"/><ellipse cx="1127" cy="747" rx="7" ry="7"/><ellipse cx="1151" cy="522" rx="4" ry="6"/></g><g fill="none" stroke="#e6b3bf" stroke-width="0.9" opacity="0.75"><polyline points="1270.0,777.2 1276.6,785.3 1284.6,791.8 1293.3,793.7 1311.8,794.8"/><polyline points="1367.0,741.4 1354.6,749.5 1347.2,769.1"/><polyline points="1108.3,775.3 1096.7,759.0 1089.5,744.1 1078.2,734.7"/><polyline points="1221.9,481.2 1230.2,476.1 1241.4,461.9 1249.5,459.0"/><polyline points="1219.9,725.3 1235.6,720.5 1251.9,716.8 1264.1,710.1 1277.1,705.0"/><polyline points="1281.7,619.4 1271.4,638.6 1265.4,651.5"/><polyline points="1255.9,746.3 1259.4,738.0 1262.1,725.2 1271.0,713.0 1277.4,707.4 1284.2,687.6"/><polyline points="1060.8,712.7 1075.1,725.1 1084.0,725.6 1101.3,729.3 1110.6,726.1 1122.4,728.5"/><polyline points="1379.0,738.1 1368.1,731.2 1361.9,723.1 1360.8,711.3"/><polyline points="1382.0,516.0 1371.2,520.4 1359.7,525.1 1354.3,534.2 1353.0,555.3 1346.6,574.8"/><polyline points="968.0,734.6 976.0,745.0 978.1,760.6"/><polyline points="1231.2,767.9 1238.5,779.0 1247.5,788.6 1259.5,792.6 1270.3,789.6 1291.6,787.4"/><polyline points="1049.7,643.0 1037.7,657.1 1034.0,668.6 1027.5,680.8 1024.9,689.1"/><polyline points="1172.6,675.9 1184.5,670.7 1191.9,660.0"/><polyline points="1003.5,666.0 985.3,658.9 977.1,659.7 960.1,654.2"/><polyline points="1148.5,488.7 1156.9,496.9 1173.9,498.4 1186.6,500.6 1199.8,505.9"/><polyline points="1459.8,717.1 1469.1,729.4 1477.1,737.5"/><polyline points="897.4,732.6 907.2,728.2 921.7,724.1 941.1,722.7"/><polyline points="971.8,572.5 956.4,582.2 943.6,590.9"/><polyline points="1100.1,615.9 1114.1,612.9 1121.9,607.5"/><polyline points="1008.7,480.2 1000.0,488.1 988.9,496.8 974.0,500.7 959.9,510.1"/><polyline points="1477.7,541.0 1484.9,521.6 1492.9,514.3"/><polyline points="961.9,779.0 968.3,788.3 968.9,805.2 964.9,822.0 953.4,831.0 935.9,834.3"/><polyline points="1408.8,616.1 1412.1,603.0 1417.8,588.1 1417.0,579.7 1407.0,566.3"/><polyline points="963.6,800.3 949.2,790.0 936.9,777.2"/><polyline points="1331.5,489.4 1310.4,486.3 1293.4,482.9 1279.5,470.6 1272.6,459.2"/><polyline points="1017.8,536.3 1031.0,546.7 1039.8,550.1"/><polyline points="922.6,725.3 928.3,735.4 942.2,751.2 960.4,755.3 973.6,768.6"/><polyline points="1245.3,629.3 1240.2,636.1 1234.4,643.5"/><polyline points="1160.1,483.4 1149.7,477.4 1135.8,471.0"/><polyline points="1044.5,722.9 1058.6,727.7 1066.4,734.8 1076.0,743.5 1080.2,754.3"/><polyline points="1464.1,563.8 1466.2,573.1 1466.5,582.2 1460.1,598.7"/><polyline points="1363.6,681.1 1344.1,687.3 1330.2,686.8 1317.4,683.7 1303.4,684.2 1293.0,683.9"/><polyline points="1488.7,682.1 1506.4,676.4 1523.5,677.2 1535.9,675.1"/><polyline points="959.4,754.5 947.4,747.0 937.9,734.0 924.6,728.2 918.1,719.0"/><polyline points="982.6,569.8 983.0,548.2 988.3,532.6 989.7,521.4"/><polyline points="1471.7,555.2 1484.3,543.4 1488.1,534.1"/><polyline points="954.9,570.0 957.1,586.8 963.9,595.3 970.2,601.0 986.0,611.7"/><polyline points="1303.8,637.7 1292.4,635.8 1285.2,631.9 1265.5,629.3 1250.7,622.7 1234.5,611.1"/><polyline points="1287.5,689.5 1302.2,681.1 1312.6,674.3 1321.2,670.6"/><polyline points="1128.5,733.8 1120.9,722.2 1110.8,708.8 1098.7,696.3"/><polyline points="1455.3,529.4 1445.1,518.6 1444.4,510.1"/><polyline points="1207.8,521.8 1209.9,512.7 1214.9,497.9 1223.9,485.7"/><polyline points="1269.1,749.7 1256.3,743.1 1252.1,733.4 1244.1,713.9 1243.0,697.4 1244.4,685.9"/><polyline points="1104.4,488.0 1118.2,498.6 1125.1,505.2 1137.1,511.6 1146.4,531.0 1141.2,551.9"/><polyline points="1155.8,523.1 1172.6,522.9 1188.5,522.1"/><polyline points="1004.6,795.7 997.8,805.7 991.7,813.3 979.9,818.7 968.2,818.1 956.7,819.4"/><polyline points="1132.7,530.4 1149.6,527.3 1163.0,521.1 1171.9,518.7 1181.6,521.7"/><polyline points="1054.0,598.3 1060.0,606.3 1062.9,622.9 1069.0,628.3 1072.8,645.1"/><polyline points="1020.0,501.6 1032.9,507.9 1040.0,516.2 1051.7,526.4"/><polyline points="1250.1,701.6 1270.5,703.5 1287.9,712.9"/><polyline points="986.3,703.2 977.6,699.2 963.8,700.6 950.1,695.5 936.7,689.2 927.1,674.2"/><polyline points="1017.8,523.1 1005.5,521.3 991.8,515.1"/><polyline points="1050.0,625.8 1042.0,636.2 1035.7,641.5"/><polyline points="889.4,718.2 904.1,718.3 911.3,722.8"/><polyline points="1319.6,680.2 1313.4,698.1 1305.1,717.1 1303.8,729.8 1305.8,738.3"/><polyline points="1045.1,588.1 1033.3,588.5 1011.6,589.1 992.9,585.4 980.4,586.0"/><polyline points="1051.5,667.0 1039.5,656.8 1026.0,648.1"/><polyline points="1115.0,504.0 1130.6,511.4 1144.3,526.9 1153.2,541.0 1159.9,557.4 1164.3,574.4"/><polyline points="996.0,694.4 988.8,702.2 987.0,720.9 976.2,734.3"/><polyline points="1096.1,747.5 1103.2,739.7 1103.9,731.4 1106.7,715.6 1117.0,704.7"/><polyline points="1194.2,748.2 1199.4,728.1 1200.9,720.0 1201.3,703.7 1214.1,686.2 1221.9,674.8"/><polyline points="925.3,686.8 926.1,700.7 937.9,713.5 939.2,733.5"/><polyline points="999.7,508.4 988.4,506.9 978.9,502.1 960.3,505.3 940.5,502.8"/><polyline points="1327.0,495.7 1311.7,481.3 1291.9,472.8 1285.8,467.5 1268.7,466.9 1260.6,462.7"/><polyline points="1059.1,715.7 1063.6,727.3 1059.1,744.9 1056.9,755.0 1049.6,761.3 1039.3,762.0"/><polyline points="1373.2,629.6 1386.8,616.4 1396.2,608.8 1402.1,588.0 1412.6,571.4 1417.9,555.8"/><polyline points="1485.6,750.5 1469.8,735.6 1457.4,730.4 1439.1,726.2 1424.9,728.3"/><polyline points="1300.7,576.6 1296.2,595.5 1290.1,601.7 1271.8,607.9"/><polyline points="1415.0,662.0 1415.6,671.2 1415.4,690.4 1422.8,707.3 1420.6,718.4 1414.7,734.8"/><polyline points="1157.8,537.4 1151.7,550.5 1154.4,569.6"/><polyline points="1354.2,546.4 1346.4,533.2 1337.7,519.5 1328.7,513.7 1311.1,511.5"/><polyline points="1092.2,659.5 1080.3,676.7 1069.1,693.4 1063.3,706.7"/><polyline points="912.3,574.7 920.4,576.5 940.2,567.3 955.0,568.4 966.5,570.4"/><polyline points="1358.7,612.2 1365.3,606.9 1370.1,597.5 1369.1,588.8"/><polyline points="1216.7,763.9 1200.3,759.8 1188.3,746.5"/><polyline points="917.6,575.7 908.7,590.6 903.4,603.9"/><polyline points="962.2,796.3 980.7,786.0 989.5,786.9 997.7,788.4"/><polyline points="1448.2,554.9 1439.6,560.1 1418.8,563.9 1406.7,563.1 1388.4,559.5 1376.7,563.9"/><polyline points="1024.5,509.3 1005.6,513.2 986.5,505.6 966.9,498.7"/><polyline points="1371.3,520.5 1389.5,511.9 1399.4,512.9"/><polyline points="1146.2,500.1 1160.1,496.3 1177.3,487.1"/><polyline points="1165.6,681.2 1169.2,691.1 1177.3,709.9 1182.2,718.7"/><polyline points="1127.7,551.1 1138.0,550.4 1150.4,549.3 1158.9,553.8 1162.5,561.8"/><polyline points="1432.8,694.9 1430.7,704.3 1418.8,722.3 1413.3,732.6 1412.0,743.9 1412.4,757.7"/><polyline points="963.8,750.8 970.9,755.0 978.2,765.5 985.3,769.1"/><polyline points="1392.6,646.6 1404.5,653.4 1414.8,655.7 1426.6,665.4 1436.5,668.7 1454.1,677.3"/><polyline points="1429.2,716.2 1423.6,700.6 1422.7,681.3 1423.4,670.5"/><polyline points="902.0,716.9 891.1,723.6 880.0,736.4"/><polyline points="1465.2,497.8 1457.1,513.1 1454.9,528.8 1448.7,534.7 1434.4,541.9 1421.4,541.6"/></g><g fill="none" stroke="#e3a7b6" stroke-width="1" opacity="0.85"><line x1="949.6" y1="575.0" x2="958.2" y2="579.1"/><line x1="894.6" y1="566.1" x2="906.3" y2="558.9"/><line x1="944.4" y1="549.9" x2="951.6" y2="544.6"/><line x1="883.6" y1="559.8" x2="877.7" y2="561.8"/><line x1="939.4" y1="521.6" x2="939.6" y2="528.5"/><line x1="924.5" y1="523.7" x2="920.1" y2="534.4"/><line x1="951.4" y1="514.2" x2="963.4" y2="508.3"/><line x1="895.9" y1="566.6" x2="889.0" y2="558.5"/><line x1="894.1" y1="541.4" x2="890.0" y2="547.0"/><line x1="889.3" y1="530.5" x2="877.7" y2="533.1"/><line x1="935.9" y1="520.0" x2="946.6" y2="530.3"/><line x1="918.3" y1="527.6" x2="920.2" y2="540.1"/><line x1="912.0" y1="538.4" x2="917.8" y2="536.4"/><line x1="925.8" y1="557.4" x2="915.9" y2="550.5"/><line x1="877.9" y1="575.1" x2="887.0" y2="578.2"/><line x1="907.1" y1="566.7" x2="904.0" y2="552.6"/><line x1="920.2" y1="576.1" x2="915.9" y2="585.1"/><line x1="919.9" y1="533.8" x2="927.6" y2="544.0"/><line x1="903.3" y1="568.7" x2="900.1" y2="563.5"/><line x1="883.7" y1="525.0" x2="880.1" y2="532.1"/><line x1="928.5" y1="527.4" x2="919.8" y2="532.2"/><line x1="954.8" y1="542.0" x2="969.9" y2="546.6"/><line x1="952.9" y1="515.6" x2="961.0" y2="506.4"/><line x1="948.4" y1="552.9" x2="938.7" y2="542.8"/><line x1="877.9" y1="519.4" x2="882.3" y2="523.7"/><line x1="893.9" y1="515.5" x2="901.1" y2="521.7"/><line x1="888.4" y1="516.9" x2="903.1" y2="513.0"/><line x1="947.1" y1="518.4" x2="934.2" y2="510.2"/><line x1="910.2" y1="545.7" x2="921.6" y2="535.7"/><line x1="921.2" y1="530.5" x2="920.0" y2="517.2"/><line x1="898.0" y1="542.1" x2="895.2" y2="534.3"/><line x1="905.9" y1="548.1" x2="895.9" y2="559.2"/><line x1="899.3" y1="543.6" x2="901.9" y2="537.9"/><line x1="901.7" y1="525.1" x2="886.6" y2="520.6"/><line x1="906.7" y1="572.1" x2="914.8" y2="585.4"/><line x1="900.9" y1="533.8" x2="899.1" y2="548.5"/><line x1="892.3" y1="516.6" x2="903.7" y2="518.2"/><line x1="923.5" y1="535.3" x2="917.4" y2="525.9"/><line x1="941.7" y1="535.7" x2="942.6" y2="524.5"/><line x1="954.1" y1="556.4" x2="963.4" y2="552.3"/><line x1="935.4" y1="579.3" x2="939.0" y2="590.9"/><line x1="918.2" y1="603.9" x2="930.2" y2="612.1"/><line x1="946.6" y1="609.4" x2="945.1" y2="621.7"/><line x1="933.8" y1="599.2" x2="927.8" y2="602.8"/><line x1="924.1" y1="593.8" x2="931.4" y2="600.5"/><line x1="949.7" y1="579.7" x2="954.9" y2="572.6"/><line x1="933.3" y1="578.3" x2="941.0" y2="567.9"/><line x1="918.7" y1="586.8" x2="911.9" y2="595.8"/><line x1="932.2" y1="597.2" x2="945.6" y2="597.8"/><line x1="949.5" y1="587.8" x2="946.0" y2="598.6"/><line x1="941.3" y1="589.7" x2="935.4" y2="595.5"/><line x1="942.2" y1="586.0" x2="954.0" y2="583.7"/><line x1="916.7" y1="585.9" x2="931.4" y2="583.3"/><line x1="948.1" y1="575.3" x2="947.4" y2="590.2"/><line x1="1036.0" y1="691.5" x2="1031.3" y2="702.7"/><line x1="1042.9" y1="703.0" x2="1041.4" y2="692.8"/><line x1="1044.2" y1="671.6" x2="1039.5" y2="662.2"/><line x1="1021.5" y1="672.7" x2="1022.8" y2="682.7"/><line x1="1046.0" y1="695.9" x2="1052.8" y2="692.7"/><line x1="1030.4" y1="686.8" x2="1019.3" y2="694.8"/><line x1="1066.0" y1="693.5" x2="1061.1" y2="680.9"/><line x1="1025.6" y1="684.5" x2="1021.1" y2="689.5"/><line x1="1036.5" y1="677.0" x2="1031.5" y2="669.6"/><line x1="1038.2" y1="707.4" x2="1022.5" y2="706.5"/><line x1="1052.6" y1="691.0" x2="1055.8" y2="683.6"/><line x1="1065.7" y1="686.5" x2="1076.5" y2="690.8"/><line x1="1026.3" y1="692.8" x2="1017.4" y2="683.1"/><line x1="1055.6" y1="670.4" x2="1068.7" y2="670.7"/><line x1="1048.6" y1="706.7" x2="1043.1" y2="710.9"/><line x1="1021.8" y1="671.2" x2="1028.0" y2="683.4"/><line x1="1042.9" y1="773.1" x2="1051.8" y2="766.3"/><line x1="1024.3" y1="749.4" x2="1018.3" y2="744.9"/><line x1="1040.8" y1="760.3" x2="1047.5" y2="761.6"/><line x1="1059.7" y1="759.7" x2="1049.6" y2="761.8"/><line x1="1053.2" y1="765.3" x2="1048.5" y2="754.5"/><line x1="1024.3" y1="750.8" x2="1023.3" y2="757.0"/><line x1="1045.7" y1="772.6" x2="1051.9" y2="770.5"/><line x1="1026.4" y1="764.4" x2="1034.6" y2="765.4"/><line x1="1035.4" y1="769.3" x2="1041.7" y2="771.1"/><line x1="1028.5" y1="750.2" x2="1034.9" y2="760.2"/><line x1="1025.6" y1="742.6" x2="1032.7" y2="734.8"/><line x1="1036.4" y1="751.3" x2="1048.4" y2="741.0"/><line x1="1206.0" y1="766.2" x2="1200.6" y2="755.7"/><line x1="1221.2" y1="756.4" x2="1219.7" y2="750.4"/><line x1="1241.2" y1="745.5" x2="1245.9" y2="754.1"/><line x1="1203.3" y1="773.5" x2="1195.7" y2="779.3"/><line x1="1217.7" y1="773.1" x2="1211.3" y2="783.8"/><line x1="1245.3" y1="757.3" x2="1255.1" y2="751.3"/><line x1="1220.0" y1="758.8" x2="1214.3" y2="767.4"/><line x1="1215.3" y1="743.3" x2="1218.1" y2="735.4"/><line x1="1208.7" y1="749.3" x2="1195.4" y2="745.5"/><line x1="1227.4" y1="758.8" x2="1229.8" y2="750.8"/><line x1="1219.2" y1="750.0" x2="1209.0" y2="756.9"/><line x1="1228.6" y1="752.9" x2="1220.6" y2="754.1"/><line x1="1337.8" y1="551.2" x2="1352.7" y2="545.5"/><line x1="1326.2" y1="542.9" x2="1337.5" y2="542.2"/><line x1="1317.8" y1="545.4" x2="1327.3" y2="554.9"/><line x1="1329.8" y1="530.6" x2="1337.8" y2="519.9"/><line x1="1333.7" y1="528.4" x2="1332.2" y2="521.1"/><line x1="1300.7" y1="552.4" x2="1296.0" y2="539.5"/><line x1="1310.2" y1="534.0" x2="1315.4" y2="529.8"/><line x1="1340.2" y1="555.7" x2="1340.6" y2="547.8"/><line x1="1331.6" y1="530.5" x2="1328.2" y2="544.3"/><line x1="1317.6" y1="539.9" x2="1323.5" y2="531.1"/><line x1="1327.6" y1="549.5" x2="1337.7" y2="537.9"/><line x1="1307.8" y1="540.3" x2="1311.7" y2="528.0"/><line x1="1440.9" y1="561.8" x2="1437.8" y2="551.6"/><line x1="1445.0" y1="573.8" x2="1450.8" y2="569.9"/><line x1="1416.7" y1="569.7" x2="1410.3" y2="564.5"/><line x1="1432.1" y1="573.9" x2="1424.1" y2="567.5"/><line x1="1435.3" y1="566.0" x2="1434.4" y2="554.5"/><line x1="1430.2" y1="591.1" x2="1422.6" y2="587.9"/><line x1="1424.9" y1="577.7" x2="1436.3" y2="571.9"/><line x1="1428.0" y1="590.9" x2="1438.4" y2="599.8"/><line x1="1431.2" y1="589.8" x2="1439.6" y2="581.5"/><line x1="1432.8" y1="592.2" x2="1430.2" y2="586.4"/><line x1="1106.6" y1="554.7" x2="1098.0" y2="567.1"/><line x1="1109.5" y1="553.9" x2="1121.7" y2="553.7"/><line x1="1103.6" y1="548.7" x2="1094.6" y2="561.2"/><line x1="1110.3" y1="544.2" x2="1097.4" y2="543.9"/><line x1="1122.2" y1="551.0" x2="1109.4" y2="550.3"/><line x1="1103.2" y1="552.2" x2="1111.0" y2="540.8"/><line x1="1144.7" y1="714.5" x2="1158.3" y2="710.3"/><line x1="1146.8" y1="714.2" x2="1153.9" y2="726.0"/><line x1="1137.1" y1="716.2" x2="1144.6" y2="714.5"/><line x1="1140.4" y1="712.2" x2="1135.6" y2="706.6"/><line x1="1150.6" y1="721.7" x2="1137.6" y2="723.1"/><line x1="1130.2" y1="726.6" x2="1138.5" y2="735.8"/></g><g fill="none" stroke="#b9b9b0" stroke-width="0.8" stroke-dasharray="2 2" opacity="0.6"><polyline points="1306.8,512.5 1304.5,497.7 1311.8,481.0 1321.5,473.0 1339.1,465.9"/><polyline points="1155.2,728.3 1162.8,721.6 1170.7,714.4"/><polyline points="1433.3,570.6 1443.0,577.2 1459.3,582.0 1471.8,582.5"/><polyline points="906.0,470.7 920.4,455.8 938.9,457.0 952.8,446.7"/><polyline points="1137.9,531.7 1126.6,531.5 1108.6,538.4"/><polyline points="1327.6,705.5 1317.7,702.3 1302.0,686.0"/><polyline points="1049.6,530.3 1028.7,524.5 1015.0,508.4 1004.1,501.7 997.9,488.3"/><polyline points="1095.9,654.9 1092.9,665.1 1085.3,683.0 1068.3,694.6"/><polyline points="1439.3,789.2 1416.2,780.0 1399.8,769.6 1386.4,770.7"/><polyline points="948.5,684.1 931.3,683.9 917.6,691.3"/><polyline points="880.5,675.3 885.9,662.1 897.1,648.3 904.8,635.4 913.1,617.2"/><polyline points="1388.7,775.3 1410.5,778.4 1427.1,786.5 1443.9,793.6"/><polyline points="1190.7,613.1 1175.0,594.2 1177.6,575.1 1184.6,566.7 1200.8,556.6"/><polyline points="1050.1,661.8 1062.2,661.6 1076.5,672.3 1091.0,689.9"/><polyline points="1002.4,719.2 1001.1,703.7 1002.2,687.5"/><polyline points="1199.2,659.6 1189.0,681.9 1191.3,703.0"/><polyline points="1001.6,752.5 994.1,741.0 983.9,725.8"/><polyline points="1005.0,662.3 1007.3,680.7 997.4,698.3 987.0,704.3 971.7,713.0"/><polyline points="1396.7,790.3 1385.2,777.9 1377.9,761.3 1383.2,749.6 1387.5,739.0"/><polyline points="1099.0,678.0 1092.1,685.6 1081.6,693.7"/><polyline points="1052.0,708.2 1029.6,713.9 1006.0,717.0"/><polyline points="1417.3,524.3 1427.7,506.0 1422.8,493.1 1409.8,481.1"/><polyline points="1195.8,588.7 1181.3,593.7 1166.1,605.2 1164.0,628.7 1169.6,643.0"/><polyline points="1304.1,474.3 1311.5,467.1 1313.8,445.2 1305.6,428.8"/><polyline points="1045.6,701.3 1034.2,709.0 1013.8,702.5"/></g><polygon points="673,467 866,467 867,476 853,484.5 853,497.5 864,519 861.7,536.5 872.5,540.8 861.7,556 868,566.8 848.7,577.6 846.5,586.3 853,599.3 861.7,612.2 868,625.2 871.9,636 880.7,643.2 881.8,656.4 866.4,674 864.2,687.3 868.6,702.7 884,718 892.9,726.9 884,744.5 881.8,757.7 897.3,766.5 906,784 928,793 954.5,793 963.3,799.6 976.5,810 673,810" fill="#ede9e3"/><polygon points="1503,602 1491,597.7 1482.5,582.7 1469.5,587 1465,597.7 1435,608.5 1413.6,615 1396,625.7 1379,636.5 1353,649.4 1331.8,658 1318.9,675 1306,662 1301.7,666.6 1314.6,683.8 1331.8,705.4 1336,727 1349,761 1374.8,787 1392,810 1503,810" fill="#ede9e3"/><path d="M673 467 H713 L716 478 L722 486 L713 493 L710 512 L673 512 Z" fill="#a9d0dc"/><path d="M702 509 L713 516 L726 524 L727 532 L713 529 L701 519 Z" fill="#a9d0dc"/><path d="M673 527 L690 532 L705 535 L722 531 L727 537 L711 542 L695 543 L673 537 Z" fill="#a9d0dc"/><path d="M673 512 L710 512 L702 509 L701 519 L713 529 L705 535 L690 532 L673 527 Z" fill="#f3f1ec"/><g fill="none" stroke="#df9fae" stroke-width="1.25" stroke-linejoin="round" stroke-linecap="round"><polyline points="933.0,465.0 928.8,493.0 925.5,515.0 922.0,536.5"/><polyline points="957.0,478.0 941.8,491.0 937.4,508.3 941.8,521.3"/><polyline points="898.5,523.5 944.0,514.8 996.0,512.6 1058.7,514.8 1081.7,527.8 1096.8,538.6 1112.0,547.3"/><polyline points="944.0,514.8 1002.4,497.5 1047.9,473.7 1055.0,465.0"/><polyline points="926.6,588.4 941.8,566.8 948.3,549.5 948.3,523.5"/><polyline points="915.8,595.0 911.5,566.8 907.1,536.5 902.8,519.1"/><polyline points="861.7,605.8 894.1,595.0 926.6,589.5 991.6,583.0 1060.0,586.3"/><polyline points="991.6,514.8 978.6,534.3 991.6,581.9 1002.4,603.6 1034.9,629.6 1044.8,674.0 1044.8,729.1 1047.0,771.0 1042.6,810.0"/><polyline points="866.0,506.0 883.3,551.6 889.8,579.8 905.0,620.9 932.5,630.0 950.1,652.0 958.9,656.4"/><polyline points="861.7,484.5 900.6,497.5 905.0,519.1"/><polyline points="935.3,614.4 931.0,595.0 926.6,590.6"/><polyline points="931.0,595.0 952.6,616.6 981.0,630.0 994.2,647.6 1020.6,663.0 1029.4,682.9 1055.8,691.7 1077.6,698.3 1097.5,700.5 1119.5,722.5 1156.9,722.5 1212.0,731.3 1227.4,740.2 1247.3,762.2 1290.0,764.4"/><polyline points="935.3,614.4 931.0,640.0 906.0,630.0 903.9,643.2"/><polyline points="1028.0,478.0 1056.5,508.3"/><polyline points="996.0,512.6 1013.2,536.5 1035.0,540.8"/><polyline points="967.7,656.4 945.7,663.0 919.3,671.8 917.1,682.9"/><polyline points="965.5,656.4 972.1,678.4 981.0,702.7 994.2,709.3 1016.2,700.5 1029.4,696.0"/><polyline points="884.0,678.4 901.7,696.0 919.3,702.7 912.7,718.1 895.0,733.5 886.2,751.1 884.0,764.3"/><polyline points="912.7,718.1 919.3,735.7 928.0,744.5 950.1,748.9 963.3,762.1 989.7,759.9 1016.2,748.9"/><polyline points="928.0,782.0 954.5,768.7 989.7,759.9 1027.2,753.3 1060.0,753.3"/><polyline points="989.7,759.9 1009.6,722.5 1020.6,700.5"/><polyline points="906.0,762.1 928.0,779.7 950.1,782.0"/><polyline points="1031.6,700.5 1033.8,740.1 1038.2,757.7"/><polyline points="1020.6,773.1 1016.2,810.0"/><polyline points="1159.6,465.0 1155.3,486.7 1144.5,504.0 1140.1,532.1 1129.3,536.5 1112.0,547.3 1109.8,564.6 1112.0,586.3 1118.5,599.3 1125.0,621.0 1126.1,630.0 1132.7,658.6 1152.5,696.1 1148.1,720.3 1161.3,735.7 1165.7,762.2 1168.0,810.0"/><polyline points="1140.1,534.3 1168.3,534.3 1200.8,527.8 1246.3,530.0 1290.0,536.5"/><polyline points="1112.0,547.3 1099.0,566.8 1092.5,582.0"/><polyline points="1060.0,625.3 1114.1,605.8 1157.5,582.0 1179.1,582.0 1194.3,592.8 1222.4,595.0 1246.3,588.5 1265.8,592.8 1290.0,597.1 1318.9,589.1 1357.6,602.0 1392.0,593.5 1435.1,576.2 1504.0,554.7"/><polyline points="1246.3,530.0 1237.6,558.1 1231.1,577.6 1220.3,586.3 1222.4,612.3 1200.8,621.0 1185.6,640.0 1174.6,660.0"/><polyline points="1289.6,582.0 1283.1,603.6 1280.9,640.0 1280.3,674.1 1267.1,696.1 1258.3,731.3 1240.7,762.2 1238.5,784.2 1247.3,810.0"/><polyline points="1272.3,465.0 1274.4,497.5 1290.0,519.1 1306.0,546.1 1323.2,552.6"/><polyline points="1161.8,482.3 1177.0,504.0 1190.0,508.3"/><polyline points="1190.0,471.5 1211.6,482.3 1274.4,486.7"/><polyline points="1134.9,733.5 1117.3,753.4 1101.9,784.2 1099.7,810.0"/><polyline points="1156.9,696.1 1192.2,700.5 1214.2,704.9 1258.3,693.9 1290.0,690.0"/><polyline points="1201.0,630.0 1223.0,663.0 1218.6,702.7 1227.4,735.7 1240.7,762.2"/><polyline points="1060.0,782.0 1099.7,793.0 1165.7,788.6 1227.4,775.4 1290.0,764.4"/><polyline points="1249.5,768.8 1290.0,797.4"/><polyline points="1174.6,630.0 1179.0,652.0 1159.1,696.1"/><polyline points="1126.1,638.8 1073.2,682.9"/><polyline points="1293.0,460.0 1318.9,516.0 1288.7,602.0"/><polyline points="1250.0,559.0 1336.1,554.7 1374.8,571.9 1413.6,571.9 1504.0,563.3"/><polyline points="1357.6,602.0 1293.0,658.0 1284.4,718.3 1262.9,810.0"/><polyline points="1422.2,576.2 1426.5,524.6 1439.4,481.5 1452.3,468.6"/><polyline points="1318.9,516.0 1336.1,477.2 1336.1,465.0"/><polyline points="1435.1,576.2 1435.1,610.7"/><polyline points="1439.4,481.5 1480.0,500.0 1503.0,498.0"/><polyline points="1060.0,517.0 1040.0,505.0 1020.0,520.0 1000.0,545.0"/><polyline points="1060.0,545.0 1040.0,560.0 1005.0,590.0"/><polyline points="880.0,520.0 870.0,560.0 880.0,600.0"/><polyline points="1112.0,547.3 1140.0,560.0 1160.0,580.0"/><polyline points="1000.0,470.0 1010.0,490.0"/><polyline points="1374.8,571.9 1365.0,602.0 1340.0,630.0"/><polyline points="1392.0,593.5 1400.0,625.0"/></g><g fill="none" stroke="#b8a8c8" stroke-width="1" stroke-dasharray="3 2" opacity="0.8"><polyline points="1060.0,467.0 1045.0,500.0 1050.0,540.0 1030.0,560.0 1010.0,600.0 1000.0,640.0 990.0,660.0"/><polyline points="975.0,665.0 960.0,700.0 950.0,740.0 958.0,770.0"/><polyline points="1100.0,467.0 1110.0,500.0 1150.0,515.0 1170.0,560.0 1150.0,600.0 1130.0,650.0 1100.0,680.0 1090.0,720.0 1080.0,760.0"/><polyline points="1270.0,467.0 1260.0,520.0 1290.0,560.0 1300.0,600.0 1270.0,640.0"/><polyline points="1300.0,530.0 1380.0,520.0 1430.0,540.0 1460.0,560.0"/></g><polyline points="866,467 867,476 853,484.5 853,497.5 864,519 861.7,536.5 872.5,540.8 861.7,556 868,566.8 848.7,577.6 846.5,586.3 853,599.3 861.7,612.2 868,625.2 871.9,636 880.7,643.2 881.8,656.4 866.4,674 864.2,687.3 868.6,702.7 884,718 892.9,726.9 884,744.5 881.8,757.7 897.3,766.5 906,784 928,793 954.5,793 963.3,799.6 976.5,810" fill="none" stroke="#b59ac6" stroke-width="1.8" opacity="0.9"/><polyline points="1503,602 1491,597.7 1482.5,582.7 1469.5,587 1465,597.7 1435,608.5 1413.6,615 1396,625.7 1379,636.5 1353,649.4 1331.8,658 1318.9,675 1306,662 1301.7,666.6 1314.6,683.8 1331.8,705.4 1336,727 1349,761 1374.8,787 1392,810" fill="none" stroke="#ab9bb4" stroke-width="1.8" opacity="0.9"/><polyline points="1491,467 1495,490 1503,525" fill="none" stroke="#b59ac6" stroke-width="1.8"/><g font-family="Liberation Sans" fill="#3a3a3a" stroke="#f6f6f0" stroke-width="2" paint-order="stroke" stroke-linejoin="round"><text x="959.1" y="478" font-size="8.3">Münster</text><text x="1026.2" y="472.6" font-size="8.3">Bielefeld</text><text x="976.9" y="499.6" font-size="8.3">Hamm</text><text x="1038" y="494.2" font-size="8.3">Paderborn</text><text x="900.2" y="532.1" font-size="9.4">Essen</text><text x="888.1" y="551.6" font-size="10.2">Düsseldorf</text><text x="919" y="572.2" font-size="8.3">Solingen</text><text x="916.2" y="585.2" font-size="10.2">Köln</text><text x="991.6" y="593.8" font-size="8.3">Siegen</text><text x="847.6" y="604.7" font-size="8.3">Aachen</text><text x="926.6" y="610.1" font-size="8.3">Bonn</text><text x="957.8" y="654.2" font-size="8.3">Koblenz</text><text x="1023.9" y="696" font-size="10.2">Frankfurt am</text><text x="1040" y="708.2" font-size="10.2">Main</text><text x="894.6" y="734.6" font-size="8.3">Trier</text><text x="1017.3" y="752.9" font-size="8.3">Mannheim</text><text x="958.9" y="770.5" font-size="8.3">Kaiserslautern</text><text x="1032.7" y="774.2" font-size="8.3">Heidelberg</text><text x="905.6" y="794" font-size="8.3">Saarbrücken</text><text x="1126" y="517" font-size="8.3">Göttingen</text><text x="1099.4" y="543" font-size="8.3">Kassel</text><text x="1271.8" y="522.4" font-size="8.3">Halle (Saale)</text><text x="1212.7" y="580.9" font-size="10.2">Erfurt</text><text x="1258.2" y="587.4" font-size="8.3">Jena</text><text x="1126.1" y="731.8" font-size="8.3">Würzburg</text><text x="1206.5" y="740.6" font-size="8.3">Erlangen</text><text x="1207.2" y="772.1" font-size="10.2">Nürnberg</text><text x="1073.7" y="804" font-size="8.3">Heilbronn</text><text x="1453.2" y="503" font-size="8.3">Cottbus</text><text x="1448" y="512.5" font-size="8.3">- Chóśebuz</text><text x="1308.1" y="539.6" font-size="10.2">Leipzig</text><text x="1428.6" y="579.7" font-size="10.2">Dresden</text><text x="1346.9" y="598.6" font-size="8.3">Chemnitz</text></g><g font-family="Liberation Sans" font-style="italic" fill="#8a78a8" stroke="#f0f0ea" stroke-width="1.8" paint-order="stroke"><text x="950.4" y="523" font-size="9">Nordrhein-</text><text x="952.6" y="533.9" font-size="9">Westfalen</text><text x="918.8" y="692.8" font-size="9">Rheinland-</text><text x="930.3" y="703.8" font-size="9">Pfalz</text><text x="908.3" y="768.7" font-size="9">Saarland</text><text x="1065.4" y="629.6" font-size="9">Hessen</text><text x="1240.9" y="484.9" font-size="9">Sachsen-Anhalt</text><text x="1193.2" y="603.6" font-size="9">Thüringen</text><text x="1380" y="580.5" font-size="9">Sachsen</text><text x="1405.8" y="475.5" font-size="9">Brandenburg</text></g><g fill="#fff" stroke="#666" stroke-width="0.8"><circle cx="929.9" cy="529.4" r="1.8"/><circle cx="913" cy="556.5" r="1.8"/><circle cx="935.3" cy="562.5" r="1.8"/><circle cx="926.7" cy="590.5" r="1.8"/><circle cx="861.5" cy="608.4" r="1.8"/><circle cx="935.8" cy="613.5" r="1.8"/><circle cx="973" cy="657.5" r="1.8"/><circle cx="988.5" cy="502.5" r="1.8"/><circle cx="1144.5" cy="519.5" r="1.8"/><circle cx="1111.5" cy="546.5" r="1.8"/><circle cx="1225.7" cy="584.6" r="1.8"/><circle cx="1266.5" cy="590.5" r="1.8"/><circle cx="1144.6" cy="721.5" r="1.8"/><circle cx="1223" cy="744.5" r="1.8"/><circle cx="1228.7" cy="760.2" r="1.8"/><circle cx="1092" cy="795" r="1.8"/><circle cx="1468" cy="494" r="1.8"/><circle cx="1323.5" cy="543" r="1.8"/><circle cx="1424.5" cy="576.5" r="1.8"/><circle cx="1364.5" cy="602.5" r="1.8"/><circle cx="1052" cy="684" r="1.8"/></g><rect x="679.5" y="473.5" width="21" height="42" rx="3" fill="none" stroke="rgba(255,255,255,0.55)" stroke-width="2"/><rect x="681" y="475" width="18" height="38.5" rx="1.5" fill="#5e84b0"/><line x1="681" y1="494" x2="699" y2="494" stroke="#a9c3dd" stroke-width="1"/><text x="690" y="489.5" text-anchor="middle" font-family="Liberation Sans" font-weight="700" font-size="12" fill="#e8eef6">+</text><rect x="686.8" y="504" width="6.4" height="1.5" fill="#cdd9e7"/><path d="M903.9 500.7 A8.6 8.6 0 1 1 921.1 500.7 Q920.6 506.7 912.5 516.3 Q904.4 506.7 903.9 500.7 Z" fill="#0f8a4c"/><circle cx="909.7" cy="498.2" r="1" fill="#fff"/><circle cx="915.3" cy="498.2" r="1" fill="#fff"/><path d="M908.5 501.5 Q912.5 505.5 916.5 501.5" fill="none" stroke="#fff" stroke-width="1.2"/><path d="M918.4 505.0 A8.6 8.6 0 1 1 935.6 505.0 Q935.1 511.0 927.0 520.6 Q918.9 511.0 918.4 505.0 Z" fill="#0f8a4c"/><circle cx="924.2" cy="502.5" r="1" fill="#fff"/><circle cx="929.8" cy="502.5" r="1" fill="#fff"/><path d="M923.0 505.8 Q927.0 509.8 931.0 505.8" fill="none" stroke="#fff" stroke-width="1.2"/><path d="M974.1 699.4 A8.6 8.6 0 1 1 991.3 699.4 Q990.8 705.4 982.7 714.2 Q974.6 705.4 974.1 699.4 Z" fill="#0f8a4c"/><circle cx="979.9" cy="696.9" r="1" fill="#fff"/><circle cx="985.5" cy="696.9" r="1" fill="#fff"/><path d="M978.7 700.2 Q982.7 704.2 986.7 700.2" fill="none" stroke="#fff" stroke-width="1.2"/></g></svg>
<div style="position:absolute;left:1527.00px;top:0.00px;width:12.50px;height:808.00px;background:#e7ebef"></div>
<div style="position:absolute;left:1539.50px;top:0.00px;width:3.50px;height:808.00px;background:#f7f8f9"></div>
<div style="position:absolute;left:1541.30px;top:0.00px;width:1.00px;height:808.00px;background:#dfe2e5"></div>
<svg style="position:absolute;left:1477.4px;top:738.3px" width="54" height="54" viewBox="0 0 54 54"><circle cx="26.8" cy="26.8" r="26.4" fill="#0b7040"/><circle cx="26.8" cy="26.8" r="24.3" fill="#dff7ea"/><circle cx="26.8" cy="26.8" r="22.8" fill="#0f8b4d"/></svg>
<div class="t" style="left:1303.60px;width:400px;text-align:center;top:751.38px;font-size:28.5px;color:#f2fbf5;font-weight:700;-webkit-text-stroke:0.9px #f2fbf5">?</div>
</body></html>
